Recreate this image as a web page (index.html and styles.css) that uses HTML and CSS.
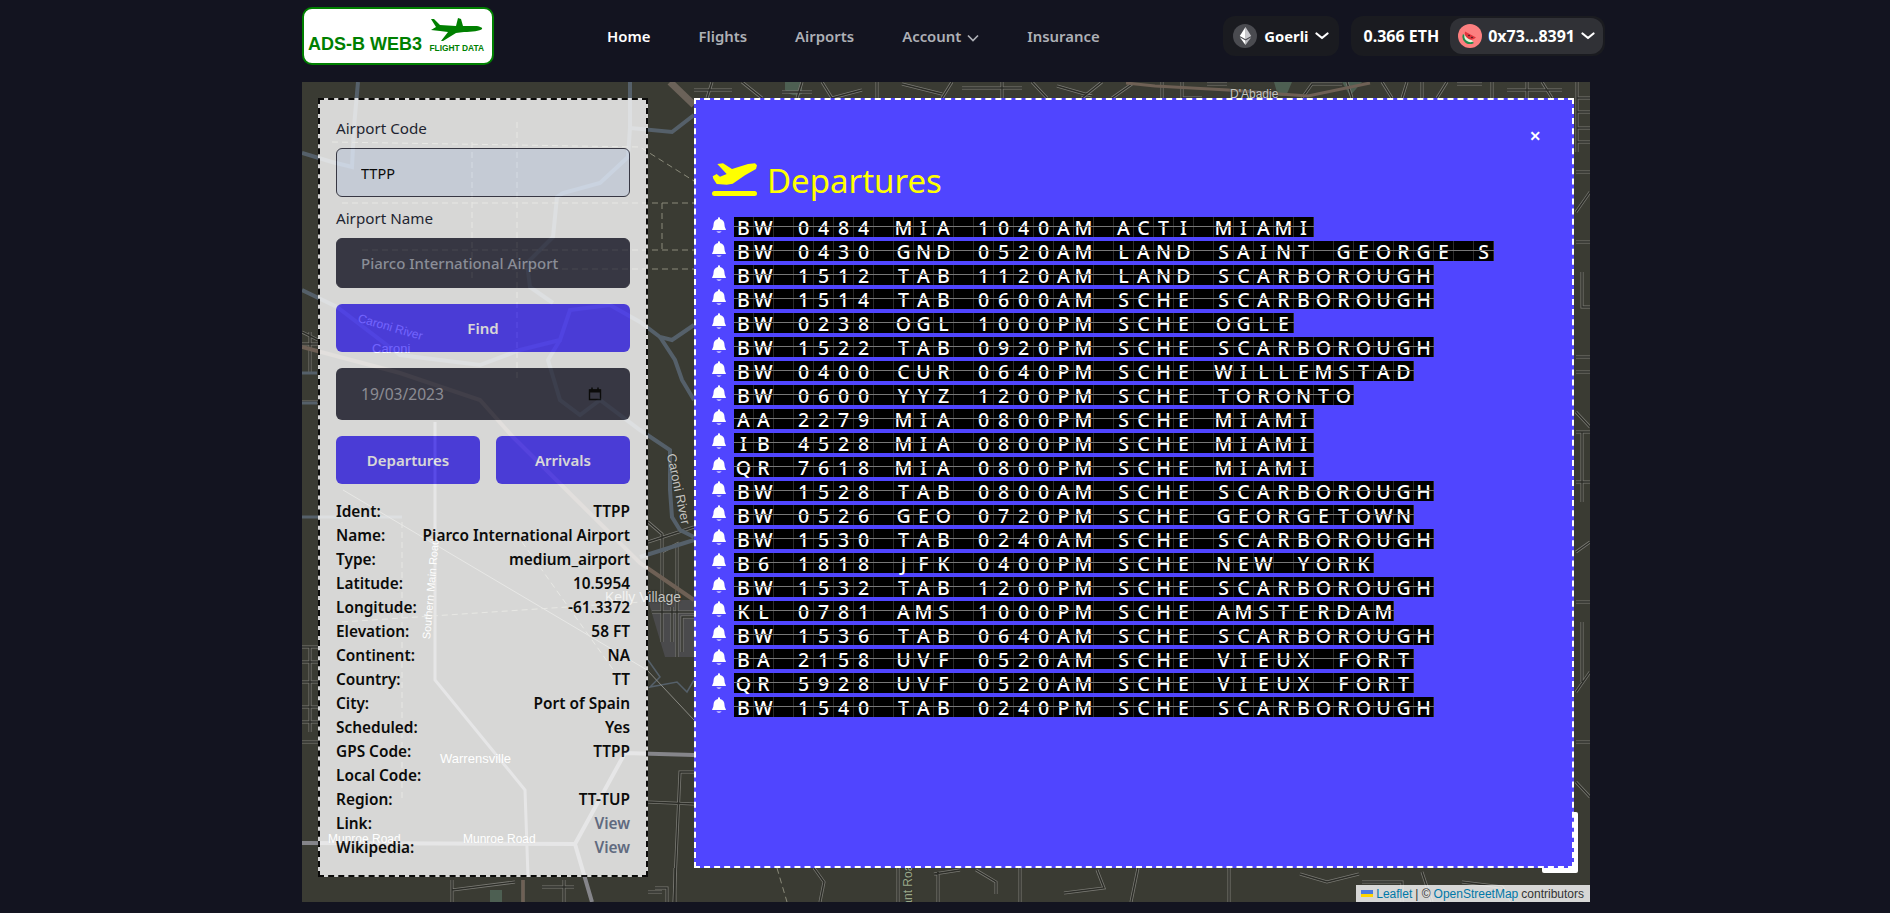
FILE: index.html
```html
<!DOCTYPE html>
<html lang="en">
<head>
    <meta charset="UTF-8">
    <meta name="viewport" content="width=device-width, initial-scale=1.0">
    <title>ADS-B Web3 - Flight Data</title>
    <link rel="stylesheet" href="styles.css">
</head>
<body>

<header class="topbar">
    <div class="logo">
        <span class="logo-name">ADS-B WEB3</span>
        <span class="logo-side">
            <svg class="logo-plane" viewBox="0 0 54 24" width="54" height="24">
                <path fill="#008000" d="M1 1 L4 1 L10 7 L26 8 L28 0 L31 1 L33 8 L45 8 C50 8 53 10 52 11 C50 13 42 14 34 14 L26 15 L13 23 L11 23 L18 14 L10 13 L1 12 L6 9 Z"/>
            </svg>
            <span class="logo-sub">FLIGHT DATA</span>
        </span>
    </div>

    <nav class="nav">
        <a class="nav-link active" href="#">Home</a>
        <a class="nav-link" href="#">Flights</a>
        <a class="nav-link" href="#">Airports</a>
        <a class="nav-link" href="#">Account
            <svg class="chev-sm" viewBox="0 0 12 8" width="12" height="8"><path d="M1 1.5 L6 6.5 L11 1.5" fill="none" stroke="currentColor" stroke-width="1.7"/></svg>
        </a>
        <a class="nav-link" href="#">Insurance</a>
    </nav>

    <div class="wallet">
        <button class="chain-btn">
            <span class="eth-icon">
                <svg viewBox="0 0 14 22" width="13" height="18">
                    <path fill="#c9c9cd" d="M7 0 L14 11 L7 15 Z"/>
                    <path fill="#ffffff" d="M7 0 L0 11 L7 15 Z"/>
                    <path fill="#b9b9be" d="M7 16.5 L14 12.5 L7 22 Z"/>
                    <path fill="#ffffff" d="M7 16.5 L0 12.5 L7 22 Z"/>
                </svg>
            </span>
            Goerli
            <svg class="chev" viewBox="0 0 14 8" width="14" height="8"><path d="M1.5 1.5 L7 6 L12.5 1.5" fill="none" stroke="#fff" stroke-width="2.2" stroke-linecap="round" stroke-linejoin="round"/></svg>
        </button>
        <div class="account-box">
            <span class="balance">0.366 ETH</span>
            <button class="account-btn">
                <span class="avatar">
                    <svg viewBox="0 0 16 16" width="16" height="16">
                        <path fill="#1f8a4c" d="M1 6 A7.5 7.5 0 0 0 12 15 Z"/>
                        <path fill="#e5f3d8" d="M2.6 6.4 A6 6 0 0 0 11.2 13.4 Z"/>
                        <path fill="#e0343c" d="M3 3.5 L14 9.5 A6.5 6.5 0 0 1 3 3.5 Z"/>
                        <circle cx="7" cy="7.5" r=".8" fill="#222"/>
                        <circle cx="10" cy="9.5" r=".8" fill="#222"/>
                    </svg>
                </span>
                0x73...8391
                <svg class="chev" viewBox="0 0 14 8" width="14" height="8"><path d="M1.5 1.5 L7 6 L12.5 1.5" fill="none" stroke="#fff" stroke-width="2.2" stroke-linecap="round" stroke-linejoin="round"/></svg>
            </button>
        </div>
    </div>
</header>

<section class="map">
    <!-- map tiles, roads drawn by hand -->
    <svg class="map-roads" viewBox="0 0 1288 820" width="1288" height="820" fill="none">
        <defs>
            <g id="streets">
                <path d="M392 8 H430 M410 0 L405 16 M440 0 L460 16 M480 10 H510 M500 0 L495 16 M520 0 L530 16 L560 8 M575 0 V16 M600 2 L640 12 M650 0 L640 16 M660 6 H720 M700 0 V16 M730 0 L745 16 M755 4 L790 14 M800 0 L780 16 M810 16 L830 2 M860 0 V16 M880 0 V16 H900 M905 2 H925 M1000 16 L1010 2 H1040 M1050 16 L1045 0 M1080 0 L1090 16 M1100 16 L1105 0 M1120 0 V16 M1135 16 L1145 0 M1155 2 H1180 M1190 0 V16 M1205 8 H1260 M1225 0 V16 M1240 0 L1250 16"/>
                <path d="M1275 0 V70 M1275 16 H1288 M1275 30 H1288 M1275 46 H1288 M1275 60 H1288 M1274 90 H1288 M1274 130 L1288 110 M1274 160 H1288 M1280 190 V225 H1288 M1274 275 H1288 M1274 290 H1288 M1274 330 L1288 345 M1274 350 H1288 M1280 350 V420 M1274 400 H1288 M1274 470 L1288 460 M1274 520 H1288 M1280 540 V600 M1274 610 L1288 590 M1274 660 H1288 M1274 700 L1288 715"/>
                <path d="M0 250 L16 258 M0 262 L16 262 M8 250 V290 M0 320 H16 M0 565 H16 M0 580 H16 M0 600 H16 M0 625 H16 M0 640 H16 M8 565 V650 M0 660 H16"/>
                <path d="M150 798 V820 M150 808 L213 800 M221 798 V820 M240 805 L272 805 M262 798 V820 M353 806 H365 V820 M373 786 V820 M512 786 L522 800 L518 820 M596 786 V820 M636 790 V820 M632 792 L658 788 M674 788 L694 800 V812 M718 786 V820 M762 811 L802 806 L795 788 M836 786 L829 820 M927 786 V820 M998 792 L1025 800 L1057 792 M1060 800 H1100 V820 M1120 790 L1130 820 M1160 800 L1200 805 L1210 820"/>
                <path d="M346 440 L360 452 V560 M346 460 L392 445 M360 470 L375 462 V575 M350 530 H392 M370 525 V560 M392 535 H380 V570"/>
                <path d="M346 720 L392 722 M392 690 L378 690 L372 820 M346 810 H360"/>
            </g>
        </defs>

        <path fill="#4a4a4c" d="M346 518 L392 518 L392 575 L363 575 Z"/>
        <path fill="#4d5f52" d="M483 0 H500 V12 Q490 16 483 8 Z M972 0 H990 L984 14 H976 Z M1040 0 H1060 L1048 14 Z M188 808 H200 V820 H188 Z"/>

        <use href="#streets" stroke="#7a7a74" stroke-width="3"/>
        <use href="#streets" stroke="#2b2c27" stroke-width="1.4"/>

        <g stroke="#55606a" stroke-width="4">
            <path d="M56 0 L52 45 L50 85 L30 80 L0 71"/>
            <path d="M328 0 L328 46 L370 50 L392 33"/>
            <path d="M328 46 L326 75 L298 101 L261 111 L255 115 L251 155 L225 181 L228 205 L251 221"/>
            <path d="M0 208 L35 225 L98 273 L178 283 L218 268 L258 258 L268 228 L308 223 L338 240 L358 255 L370 258 L392 243"/>
            <path d="M358 255 L373 278 L380 298 L392 318"/>
            <path d="M258 258 L246 278 L258 318 L278 333 L298 318 L338 348 L368 368 L368 408 L370 435 L378 448 L392 455"/>
            <path d="M338 475 L392 458"/>
            <path d="M0 291 H15 M0 321 H15 M0 435 H100" stroke-width="3"/>
            <path d="M346 578 L358 595 L348 605 L375 600 L385 610 L392 598" stroke-width="1.5"/>
        </g>
        <path stroke="#6e6055" stroke-width="4" d="M0 265 L98 291 L178 318 L211 355 L338 481 L392 518"/>
        <path stroke="#6e6055" stroke-width="3" d="M824 1 L853 4 L926 8 L1006 14 L1068 1"/>
        <path stroke="#6b6259" stroke-width="7" d="M368 0 L392 23"/>
        <path stroke="#6e6055" stroke-width="3" d="M221 798 V820"/>
        <path stroke="#85858a" stroke-width="4" d="M0 761 L273 762 L323 671 L392 673 M273 762 L290 820"/>
        <path stroke="#85858a" stroke-width="3" d="M133 340 L133 598 L223 708 L226 795"/>
        <path stroke="#8a8a84" stroke-width="1" d="M41 408 L345 588 L392 638"/>

        <g stroke="#8a8a7a" stroke-width="1" stroke-dasharray="6 4">
            <path d="M30 60 L338 65 L392 99 M40 121 H392 M60 168 H392 M80 187 H392 M360 121 V168 M215 40 V300 M170 60 V200"/>
            <path d="M100 440 V720 M40 540 L340 520 M220 460 L320 600 M475 786 L485 820"/>
        </g>
    </svg>
    <span class="map-label label-dabadie">D'Abadie</span>
    <span class="map-label label-kelly">Kelly Village</span>
    <span class="map-label label-warrens">Warrensville</span>
    <span class="map-label label-munroe">Munroe Road</span>
    <span class="map-label label-munroe2">Munroe Road</span>
    <span class="map-label label-caroni">Caroni</span>
    <span class="map-label label-river">Caroni River</span>
    <span class="map-label label-river2">Caroni River</span>
    <span class="map-label label-main">Southern Main Road</span>
    <span class="map-label label-grant">Grant Road</span>
    <span class="zoom-box"></span>

    <div class="side-panel">
        <label class="field-label">Airport Code</label>
        <input class="field-input" type="text" value="TTPP">
        <label class="field-label">Airport Name</label>
        <input class="field-input dark" type="text" value="Piarco International Airport">
        <button class="btn btn-find">Find</button>
        <div class="date-input">
            <span>19/03/2023</span>
            <svg viewBox="0 0 14 14" width="14" height="14"><path d="M1.5 3 H12.5 V12.5 H1.5 Z" fill="none" stroke="#000" stroke-width="1.4"/><path d="M1.5 4 H12.5" stroke="#000" stroke-width="3"/><path d="M4 .5 V3 M10 .5 V3" stroke="#000" stroke-width="1.5"/></svg>
        </div>
        <div class="btn-row">
            <button class="btn btn-dep">Departures</button>
            <button class="btn btn-arr">Arrivals</button>
        </div>
        <dl class="info" id="airportInfo"></dl>
    </div>

    <div class="board">
        <span class="board-close">&times;</span>
        <h2 class="board-title">
            <svg viewBox="0 0 45 34" width="45" height="34"><path fill="#ffff00" d="M5.3 1 L11 .3 L20 6 L36 1 L43 .3 L45 2.3 L44 6 L33 12.3 L20.7 20.7 L14.7 21.7 L4.7 21 L1.3 15.7 L.7 13.3 L4.7 11 L8 13.7 L14.7 11 Z"/><rect x="0" y="28" width="45" height="5" rx="2.5" fill="#ffff00"/></svg>
            Departures
        </h2>
        <div class="flights" id="flightList"></div>
    </div>

    <div class="attribution">
        <svg viewBox="0 0 12 8" width="12" height="8"><rect width="12" height="4" fill="#4c7be1"/><rect y="4" width="12" height="3" fill="#ffd500"/></svg>
        <a href="#">Leaflet</a> | &copy; <a href="#">OpenStreetMap</a> contributors
    </div>
</section>

<script src="script.js"></script>
</body>
</html>
```

FILE: styles.css
```css
/* General Styles */
html, body {
    height: 100%;
    margin: 0;
    overflow: hidden;
}

body {
    font-family: "Noto Sans", Arial, sans-serif;
    background-color: #131420;
    color: #fff;
}

button {
    font-family: inherit;
    border: none;
}

/* Header */
.topbar {
    display: flex;
    align-items: center;
    height: 82px;
    width: 1303px;
    margin-left: 302px;
    padding-bottom: 10px;
    box-sizing: border-box;
}

.logo {
    display: flex;
    align-items: flex-end;
    justify-content: space-between;
    box-sizing: border-box;
    width: 192px;
    height: 58px;
    padding: 0 8px 9px 4px;
    background: #fff;
    border: 2px solid #008000;
    border-radius: 10px;
    color: #008000;
    font-family: "Liberation Sans", Arial, sans-serif;
    font-weight: bold;
}

.logo-name {
    font-size: 18px;
    line-height: 20px;
}

.logo-side {
    display: flex;
    flex-direction: column;
    align-items: center;
    margin-bottom: 1px;
}

.logo-plane {
    margin-bottom: 1px;
}

.logo-sub {
    font-size: 8.4px;
    line-height: 10px;
}

.nav {
    display: flex;
    align-items: center;
    gap: 48px;
    margin-left: 113px;
}

.nav-link {
    color: #aeb0b6;
    font-size: 14.9px;
    font-weight: 600;
    text-decoration: none;
}

.nav-link.active {
    color: #fff;
}

.chev-sm {
    margin-left: 2px;
}

/* Wallet */
.wallet {
    display: flex;
    align-items: center;
    gap: 12px;
    margin-left: auto;
}

.chain-btn {
    display: flex;
    align-items: center;
    gap: 7px;
    height: 40px;
    padding: 0 10px;
    background: #1a1b20;
    border-radius: 12px;
    color: #fff;
    font-size: 14.8px;
    font-weight: 700;
}

.eth-icon {
    display: flex;
    align-items: center;
    justify-content: center;
    width: 24px;
    height: 24px;
    border-radius: 50%;
    background: #4a4b50;
}

.account-box {
    display: flex;
    align-items: center;
    height: 40px;
    padding: 0 2px 0 12px;
    background: #1a1b20;
    border-radius: 12px;
    font-size: 16px;
    font-weight: 700;
}

.balance {
    margin-right: 11px;
}

.account-btn {
    display: flex;
    align-items: center;
    gap: 6px;
    height: 36px;
    padding: 0 8px;
    background: #303136;
    border-radius: 12px;
    color: #fff;
    font-size: 16px;
    font-weight: 700;
}

.avatar {
    display: flex;
    align-items: center;
    justify-content: center;
    width: 24px;
    height: 24px;
    border-radius: 50%;
    background: #fc7f7f;
}

/* Map */
.map {
    position: relative;
    display: flex;
    align-items: flex-start;
    gap: 46px;
    box-sizing: border-box;
    width: 1288px;
    height: 820px;
    margin-left: 302px;
    padding: 16px;
    background: #3a3b33;
    overflow: hidden;
}

.map-roads {
    position: absolute;
    top: 0;
    left: 0;
}

.map-label {
    position: absolute;
    font-family: "Liberation Sans", Arial, sans-serif;
    font-size: 12px;
    line-height: 14px;
    color: #c4c4c0;
    text-shadow: 0 0 2px #2b2c27;
    white-space: nowrap;
}

.label-dabadie { top: 5px; left: 928px; }
.label-kelly { top: 508px; left: 303px; font-size: 14px; }
.label-warrens { top: 670px; left: 138px; font-size: 13px; color: #fff; }
.label-munroe { top: 750px; left: 26px; color: #fff; }
.label-munroe2 { top: 750px; left: 161px; color: #fff; }
.label-caroni { top: 260px; left: 70px; font-size: 13px; color: #fff; }
.label-river { top: 238px; left: 55px; color: #fff; transform: rotate(16deg); }
.label-river2 { top: 400px; left: 340px; font-size: 13px; transform: rotate(78deg); }
.label-main { top: 500px; left: 78px; font-size: 11px; color: #fff; transform: rotate(-85deg); }
.label-grant { top: 800px; left: 575px; color: #9aa88a; transform: rotate(-90deg); }

.zoom-box {
    position: absolute;
    top: 730px;
    left: 1240px;
    width: 36px;
    height: 61px;
    background: #fff;
    border-radius: 2px;
}

/* Left panel - whole card is see-through, map shows under the controls too */
.side-panel {
    position: relative;
    box-sizing: border-box;
    flex: none;
    width: 330px;
    height: 779px;
    padding: 18px 16px 0;
    background: #fff;
    border: 2px dashed #000;
    color: #000;
    opacity: 0.8;
}

.field-label {
    display: block;
    height: 30px;
    color: #191c32;
    font-size: 15.2px;
    line-height: 20px;
}

.field-input {
    display: block;
    box-sizing: border-box;
    width: 100%;
    height: 49px;
    margin-bottom: 11px;
    padding: 0 24px;
    background: #e8f0fe;
    border: 1px solid #373747;
    border-radius: 6px;
    color: #000;
    font-family: inherit;
    font-size: 14.5px;
}

.field-input.dark {
    height: 50px;
    margin-bottom: 16px;
    background: #373747;
    color: #9ea2b0;
    font-size: 15px;
    font-weight: 500;
}

.btn {
    height: 48px;
    background: #4f3dff;
    border-radius: 6px;
    color: #fff;
    font-size: 15px;
    font-weight: 600;
}

.btn-find {
    display: block;
    width: 100%;
    margin-bottom: 16px;
}

.date-input {
    display: flex;
    align-items: center;
    justify-content: space-between;
    box-sizing: border-box;
    height: 52px;
    margin-bottom: 16px;
    padding: 0 28px 0 25px;
    background: #373747;
    border-radius: 6px;
    color: #a0a0ac;
    font-size: 15.6px;
}

.btn-row {
    display: flex;
    gap: 16px;
    margin-bottom: 16px;
}

.btn-dep {
    width: 144px;
}

.btn-arr {
    width: 134px;
}

.info {
    display: grid;
    grid-template-columns: auto auto;
    grid-auto-rows: 24px;
    margin: 0;
    font-size: 15.4px;
    font-weight: 600;
    line-height: 24px;
}

.info dd {
    margin: 0;
    text-align: right;
}

.info dd a {
    color: #6a7693;
    text-decoration: none;
}

/* Departures board */
.board {
    position: relative;
    box-sizing: border-box;
    flex: none;
    width: 880px;
    height: 770px;
    padding: 55px 0 0 16px;
    background: #5045ff;
    border: 2px dashed #fff;
}

.board-close {
    position: absolute;
    top: 24px;
    right: 31px;
    font-size: 20px;
    font-weight: 600;
    line-height: 24px;
}

.board-title {
    display: flex;
    align-items: center;
    gap: 10px;
    height: 50px;
    margin: 0 0 12px;
    color: #ff0;
    font-size: 33px;
    font-weight: 400;
}

.flight {
    display: flex;
    align-items: flex-start;
    margin-bottom: 4px;
}

.bell {
    flex: none;
    width: 22px;
    height: 20px;
}

.flight-chars {
    position: relative;
    display: flex;
    height: 20px;
    background: #000;
}

/* the split-flap line through the middle */
.flight-chars::after {
    content: "";
    position: absolute;
    left: 0;
    right: 0;
    top: 9px;
    height: 1px;
    background: #777;
}

.flap {
    box-sizing: border-box;
    width: 20px;
    height: 20px;
    border-right: 1px solid #2c2c2c;
    color: #fff;
    font-size: 19.5px;
    font-weight: 500;
    line-height: 21px;
    text-align: center;
}

/* Attribution */
.attribution {
    position: absolute;
    right: 0;
    bottom: 0;
    display: flex;
    align-items: center;
    gap: 3px;
    height: 17px;
    padding: 0 6px 0 5px;
    background: rgba(255, 255, 255, 0.8);
    color: #333;
    font-family: "Liberation Sans", Arial, sans-serif;
    font-size: 12px;
}

.attribution a {
    color: #0078a8;
    text-decoration: none;
}
```

FILE: script.js
```js
// Airport details
const airport = [
    ["Ident:", "TTPP"],
    ["Name:", "Piarco International Airport"],
    ["Type:", "medium_airport"],
    ["Latitude:", "10.5954"],
    ["Longitude:", "-61.3372"],
    ["Elevation:", "58 FT"],
    ["Continent:", "NA"],
    ["Country:", "TT"],
    ["City:", "Port of Spain"],
    ["Scheduled:", "Yes"],
    ["GPS Code:", "TTPP"],
    ["Local Code:", ""],
    ["Region:", "TT-TUP"],
    ["Link:", "View"],
    ["Wikipedia:", "View"]
];

// Departures list
const flights = [
    "BW 0484 MIA 1040AM ACTI MIAMI",
    "BW 0430 GND 0520AM LAND SAINT GEORGE S",
    "BW 1512 TAB 1120AM LAND SCARBOROUGH",
    "BW 1514 TAB 0600AM SCHE SCARBOROUGH",
    "BW 0238 OGL 1000PM SCHE OGLE",
    "BW 1522 TAB 0920PM SCHE SCARBOROUGH",
    "BW 0400 CUR 0640PM SCHE WILLEMSTAD",
    "BW 0600 YYZ 1200PM SCHE TORONTO",
    "AA 2279 MIA 0800PM SCHE MIAMI",
    "IB 4528 MIA 0800PM SCHE MIAMI",
    "QR 7618 MIA 0800PM SCHE MIAMI",
    "BW 1528 TAB 0800AM SCHE SCARBOROUGH",
    "BW 0526 GEO 0720PM SCHE GEORGETOWN",
    "BW 1530 TAB 0240AM SCHE SCARBOROUGH",
    "B6 1818 JFK 0400PM SCHE NEW YORK",
    "BW 1532 TAB 1200PM SCHE SCARBOROUGH",
    "KL 0781 AMS 1000PM SCHE AMSTERDAM",
    "BW 1536 TAB 0640AM SCHE SCARBOROUGH",
    "BA 2158 UVF 0520AM SCHE VIEUX FORT",
    "QR 5928 UVF 0520AM SCHE VIEUX FORT",
    "BW 1540 TAB 0240PM SCHE SCARBOROUGH"
];

const bellSvg = '<svg class="bell" viewBox="0 0 22 20"><path fill="#fff" d="M6 0.5 C6 -0.5 8 -0.5 8 0.5 L8 1.5 C11 2 12.5 4.5 12.5 7.5 C12.5 10 14 11.5 14 12.5 L0 12.5 C0 11.5 1.5 10 1.5 7.5 C1.5 4.5 3 2 6 1.5 Z M4.5 14 H9.5 C9 15.5 5 15.5 4.5 14 Z" transform="translate(0 .5)"/></svg>';

const info = document.getElementById("airportInfo");
airport.forEach(([label, value]) => {
    const dt = document.createElement("dt");
    dt.textContent = label;
    const dd = document.createElement("dd");
    if (value === "View") {
        dd.innerHTML = '<a href="#">View</a>';
    } else {
        dd.textContent = value;
    }
    info.append(dt, dd);
});

const list = document.getElementById("flightList");
flights.forEach(flight => {
    const row = document.createElement("div");
    row.className = "flight";
    row.innerHTML = bellSvg;

    const chars = document.createElement("div");
    chars.className = "flight-chars";
    for (const ch of flight) {
        const flap = document.createElement("span");
        flap.className = "flap";
        flap.textContent = ch;
        chars.appendChild(flap);
    }
    row.appendChild(chars);
    list.appendChild(row);
});
```
